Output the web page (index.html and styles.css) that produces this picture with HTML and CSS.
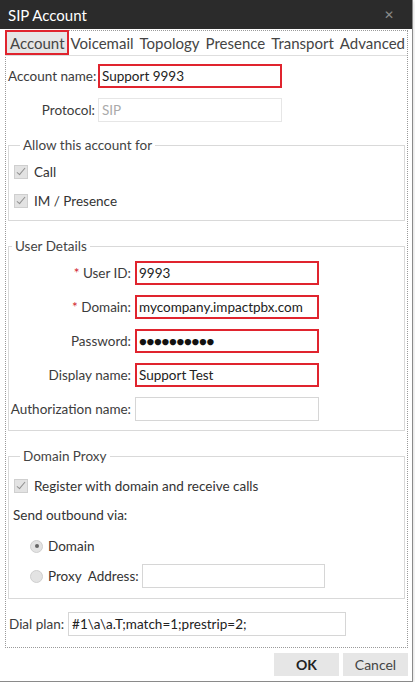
FILE: index.html
```html
<!DOCTYPE html>
<html lang="en">
<head>
    <meta charset="UTF-8">
    <title>SIP Account</title>
    <link rel="stylesheet" href="styles.css">
</head>
<body>

<div class="window">
    <div class="titlebar">
        <span class="title">SIP Account</span>
        <span class="close">&#x2715;</span>
    </div>

    <div class="panel">
        <div class="tabs">
            <span class="tab active">Account</span>
            <span class="tab">Voicemail</span>
            <span class="tab">Topology</span>
            <span class="tab">Presence</span>
            <span class="tab">Transport</span>
            <span class="tab">Advanced</span>
        </div>

        <div class="content">
            <div class="row account-row">
                <label class="label small">Account name:</label>
                <div class="field red">Support 9993</div>
            </div>
            <div class="row account-row">
                <label class="label small">Protocol:</label>
                <div class="field disabled">SIP</div>
            </div>

            <fieldset class="group allow">
                <legend>Allow this account for</legend>
                <div class="check-row"><span class="check"></span>Call</div>
                <div class="check-row"><span class="check"></span>IM / Presence</div>
            </fieldset>

            <fieldset class="group details">
                <legend>User Details</legend>
                <div class="row">
                    <label class="label wide"><span class="star">*</span> User ID:</label>
                    <div class="field red">9993</div>
                </div>
                <div class="row">
                    <label class="label wide"><span class="star">*</span> Domain:</label>
                    <div class="field red">mycompany.impactpbx.com</div>
                </div>
                <div class="row">
                    <label class="label wide">Password:</label>
                    <div class="field red dots">&#9679;&#9679;&#9679;&#9679;&#9679;&#9679;&#9679;&#9679;&#9679;&#9679;</div>
                </div>
                <div class="row">
                    <label class="label wide">Display name:</label>
                    <div class="field red">Support Test</div>
                </div>
                <div class="row">
                    <label class="label wide">Authorization name:</label>
                    <div class="field empty"></div>
                </div>
            </fieldset>

            <fieldset class="group proxy">
                <legend>Domain Proxy</legend>
                <div class="check-row"><span class="check"></span>Register with domain and receive calls</div>
                <div class="plain-row">Send outbound via:</div>
                <div class="radio-row"><span class="radio on"></span>Domain</div>
                <div class="radio-row">
                    <span class="radio"></span>Proxy
                    <span class="addr">Address:</span>
                    <div class="field empty addr-field"></div>
                </div>
            </fieldset>

            <div class="row dial-row">
                <label class="dial-label">Dial plan:</label>
                <div class="field dial">#1\a\a.T;match=1;prestrip=2;</div>
            </div>
        </div>
    </div>

    <div class="buttons">
        <button class="btn ok">OK</button>
        <button class="btn">Cancel</button>
    </div>
</div>

</body>
</html>
```

FILE: styles.css
```css
body {
    margin: 0;
    background-color: white;
    font-family: Lato, "Noto Sans", sans-serif;
    font-size: 13.5px;
    color: #333;
}
.window {
    width: 412px;
    height: 681px;
    border-right: 1px solid #8a8a8a;
    border-bottom: 1px solid #8a8a8a;
    background-color: white;
    box-shadow: 0 1px 4px rgba(0, 0, 0, 0.2);
}
.titlebar {
    height: 29px;
    background-color: #2b2b2b;
    color: white;
    display: flex;
    align-items: center;
    justify-content: space-between;
    padding: 0 18px 0 8px;
}
.title {
    font-size: 15px;
}
.close {
    color: #8c8c8c;
    font-size: 12px;
}
.panel {
    margin: 1px 4px 0 5px;
    border: 1px dotted #9a9a9a;
    height: 616px;
}
.tabs {
    display: flex;
    align-items: stretch;
    height: 25px;
    border-bottom: 1px solid #dedede;
    margin: -1px 0 0 -1px;
    white-space: nowrap;
}
.tab {
    font-size: 15px;
    color: #444;
    padding: 0 3px 0 2px;
    display: flex;
    align-items: center;
    margin-right: 1px;
}
.tab.active {
    background-color: #e6e6e6;
    border: 2px solid #e0242e;
    padding: 0 2px 0 3px;
    margin-right: 0;
}
.content {
    padding: 8px 2px 0 2px;
}
.row {
    display: flex;
    align-items: center;
    height: 24px;
    margin-bottom: 10px;
    white-space: nowrap;
}
.label {
    text-align: right;
    padding-right: 3px;
    color: #3c3c3c;
}
.label.small {
    width: 87px;
}
.label.wide {
    width: 122px;
    padding-right: 4px;
}
.star {
    color: #d0202a;
}
.field {
    box-sizing: border-box;
    width: 184px;
    height: 24px;
    border: 1px solid #d6d6d6;
    padding: 0 3px;
    display: flex;
    align-items: center;
    color: #222;
    background-color: white;
}
.field.red {
    border: 2px solid #e0242e;
    padding: 0 2px;
}
.field.disabled {
    color: #aaa;
    border-color: #e6e6e6;
}
.field.dots {
    font-size: 13px;
    letter-spacing: -0.3px;
    color: #111;
}
.group {
    margin: 0;
    border: 1px solid #d9d9d9;
    padding: 0 8px;
}
.group legend {
    padding: 0 3px;
    margin-left: 3px;
    color: #444;
}
.allow {
    margin-top: 15px;
    padding-top: 9px;
    padding-bottom: 9px;
}
.check-row {
    display: flex;
    align-items: center;
    height: 20px;
    margin-bottom: 9px;
    color: #333;
    white-space: nowrap;
}
.allow .check-row:last-child {
    margin-bottom: 0;
}
.check {
    box-sizing: border-box;
    width: 14px;
    height: 14px;
    background-color: #e3e3e3;
    border: 1px solid #cfcfcf;
    margin: 0 6px 0 -3px;
    position: relative;
}
.check::after {
    content: "";
    position: absolute;
    left: 4px;
    top: 0px;
    width: 3px;
    height: 8px;
    border-right: 1.5px solid #8f8f8f;
    border-bottom: 1.5px solid #8f8f8f;
    transform: rotate(40deg);
}
.details {
    margin-top: 17px;
    padding: 7px 0 0 0;
}
.details .row:last-child {
    margin-bottom: 9px;
}
.proxy {
    margin-top: 17px;
    padding-top: 12px;
    padding-bottom: 10px;
}
.plain-row {
    height: 20px;
    display: flex;
    align-items: center;
    margin: 3px 0 9px -4px;
}
.radio-row {
    display: flex;
    align-items: center;
    height: 24px;
    margin-bottom: 6px;
    padding-left: 13px;
    white-space: nowrap;
}
.radio-row:last-child {
    margin-bottom: 0;
}
.radio {
    box-sizing: border-box;
    width: 13px;
    height: 13px;
    border-radius: 50%;
    background-color: #e3e3e3;
    border: 1px solid #cfcfcf;
    margin-right: 5px;
    position: relative;
}
.radio.on::after {
    content: "";
    position: absolute;
    left: 3.5px;
    top: 3.5px;
    width: 4px;
    height: 4px;
    border-radius: 50%;
    background-color: #666;
}
.addr {
    margin: 0 3px 0 6px;
}
.field.addr-field {
    width: 183px;
}
.dial-row {
    margin: 13px 0 0 0;
}
.dial-label {
    padding: 0 4px 0 1px;
    color: #3c3c3c;
}
.field.dial {
    width: 278px;
}
.buttons {
    display: flex;
    justify-content: flex-end;
    gap: 4px;
    padding: 5px 4px 0 0;
}
.btn {
    width: 65px;
    height: 23px;
    border: none;
    background-color: #e6e6e6;
    font-family: Lato, "Noto Sans", sans-serif;
    font-size: 14px;
    color: #444;
}
.btn.ok {
    font-weight: bold;
    color: #222;
}
```
